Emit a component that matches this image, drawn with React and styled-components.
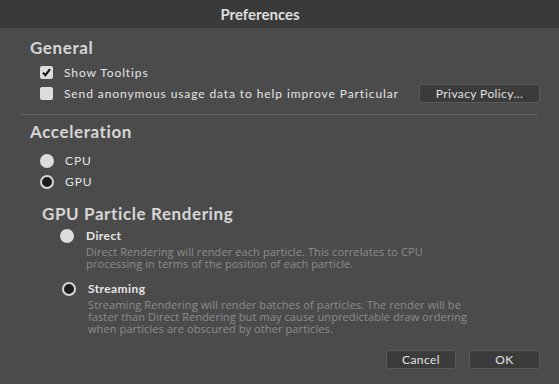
import React from "react";
import styled, { createGlobalStyle } from "styled-components";

const GlobalStyle = createGlobalStyle`
  html, body {
    margin: 0;
    padding: 0;
    background: #4b4b4b;
  }
  body {
    font-family: "Lato", "Liberation Sans", sans-serif;
  }
`;

const Window = styled.div`
  width: 559px;
  height: 384px;
  display: flex;
  flex-direction: column;
  background: #4b4b4b;
  overflow: hidden;
`;

const TitleBar = styled.div`
  flex: none;
  height: 28px;
  display: flex;
  align-items: center;
  justify-content: center;
  padding-right: 39px;
  background: #3a3a3a;
  color: #dedede;
  font-size: 15px;
  font-weight: 700;
`;

const Body = styled.div`
  flex: 1;
  display: flex;
  flex-direction: column;
  padding: 0 19px 0 20px;
`;

const Heading = styled.div`
  margin: ${(p) => p.$top || 0}px 0 0 ${(p) => p.$indent || 10}px;
  height: 20px;
  line-height: 20px;
  color: #d6d6d6;
  font-size: 17px;
  font-weight: 700;
  letter-spacing: 0.6px;
`;

const Row = styled.div`
  display: flex;
  align-items: center;
  height: 21px;
  padding-left: 20px;
  gap: 11px;
  color: #e4e4e4;
  font-size: 12px;
  letter-spacing: 0.9px;
`;

const Label = styled.span`
  flex: 1;
`;

const Box = styled.span`
  width: 13px;
  height: 13px;
  flex: none;
  border-radius: 2px;
  background: #dcdcdc;
  display: flex;
  align-items: center;
  justify-content: center;
`;

const Radio = styled.span`
  width: 14px;
  height: 14px;
  flex: none;
  box-sizing: border-box;
  border-radius: 50%;
  background: ${(p) => (p.$on ? "#1d1d19" : "#dcdcdc")};
  border: ${(p) => (p.$on ? "2px solid #d8d8d8" : "none")};
`;

const Button = styled.button`
  height: 19px;
  width: ${(p) => p.$w}px;
  box-sizing: border-box;
  padding: 0;
  border: 1px solid #5a5a5a;
  border-radius: 3px;
  background: #3b3b3b;
  color: #e2e2e2;
  font-family: inherit;
  font-size: 12px;
  letter-spacing: 0.4px;
`;

const Divider = styled.div`
  height: 1px;
  margin: 10px 2px 0 0;
  background: #626262;
`;

const Option = styled.div`
  display: grid;
  grid-template-columns: 14px 1fr;
  column-gap: 12px;
  padding-left: ${(p) => p.$indent}px;
  margin-top: ${(p) => p.$top}px;
  align-items: center;
`;

const OptionTitle = styled.div`
  color: #e6e6e6;
  font-size: 12px;
  font-weight: 700;
  letter-spacing: 0.4px;
  line-height: 16px;
`;

const Desc = styled.div`
  grid-column: 2;
  margin-top: 2px;
  color: #8c8c8c;
  font-family: "Open Sans", "DejaVu Sans", sans-serif;
  font-size: 11px;
  letter-spacing: 0.1px;
  line-height: 12px;
  white-space: nowrap;
`;

const Footer = styled.div`
  display: flex;
  justify-content: flex-end;
  gap: 13px;
  margin-top: auto;
  margin-bottom: 15px;
`;

function Check() {
  return (
    <svg width="11" height="11" viewBox="0 0 11 11">
      <path d="M2 5.6 L4.4 8.2 L9 2.2" fill="none" stroke="#111" strokeWidth="2" />
    </svg>
  );
}

export default function App() {
  return (
    <>
      <GlobalStyle />
      <Window>
        <TitleBar>Preferences</TitleBar>
        <Body>
          <Heading $top={10}>General</Heading>
          <Row style={{ marginTop: 4 }}>
            <Box>
              <Check />
            </Box>
            <Label>Show Tooltips</Label>
          </Row>
          <Row>
            <Box />
            <Label>Send anonymous usage data to help improve Particular</Label>
            <Button $w={121}>Privacy Policy...</Button>
          </Row>
          <Divider />
          <Heading $top={7}>Acceleration</Heading>
          <Row style={{ marginTop: 8 }}>
            <Radio />
            <Label>CPU</Label>
          </Row>
          <Row>
            <Radio $on />
            <Label>GPU</Label>
          </Row>
          <Heading $top={12} $indent={22}>
            GPU Particle Rendering
          </Heading>
          <Option $indent={40} $top={4}>
            <Radio />
            <OptionTitle>Direct</OptionTitle>
            <Desc>
              Direct Rendering will render each particle. This correlates to CPU
              <br />
              processing in terms of the position of each particle.
            </Desc>
          </Option>
          <Option $indent={42} $top={11}>
            <Radio $on />
            <OptionTitle>Streaming</OptionTitle>
            <Desc>
              Streaming Rendering will render batches of particles. The render will be
              <br />
              faster than Direct Rendering but may cause unpredictable draw ordering
              <br />
              when particles are obscured by other particles.
            </Desc>
          </Option>
          <Footer>
            <Button $w={70}>Cancel</Button>
            <Button $w={71}>OK</Button>
          </Footer>
        </Body>
      </Window>
    </>
  );
}
